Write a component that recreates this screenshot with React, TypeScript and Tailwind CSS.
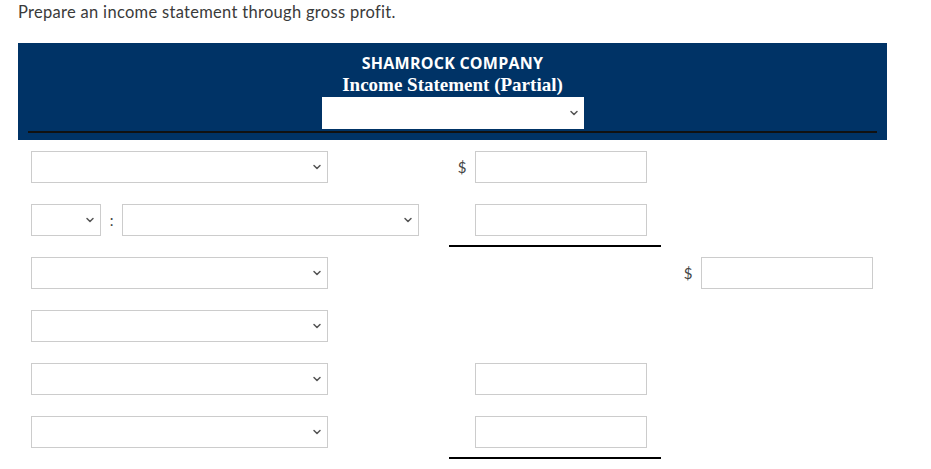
import { ChevronDown } from "lucide-react";

function Select({ w, plain }: { w: string; plain?: boolean }) {
  return (
    <div
      className={`${w} h-[32px] bg-white flex items-center justify-end pr-[4px] ${
        plain ? "" : "border border-[#cccccc]"
      }`}
    >
      <ChevronDown size={12} strokeWidth={3} className="text-[#555555]" />
    </div>
  );
}

function Input({ dollar }: { dollar?: boolean }) {
  return (
    <div className="flex items-center">
      <span className="w-[26px] text-center text-[15px] text-[#444444]">{dollar ? "$" : ""}</span>
      <div className="w-[172px] h-[32px] bg-white border border-[#cccccc]" />
    </div>
  );
}

export default function App() {
  const row = "h-[53px] flex items-start";
  const col1 = "w-[418px] flex items-start";
  const col2 = "w-[212px]";
  const ruled = "w-[212px] pb-[9px] border-b-2 border-black";

  return (
    <div className="w-[931px] h-[469px] bg-white font-['Lato',sans-serif] text-[#333333]">
      <p className="pl-[18px] pt-[1px] text-[16.5px] leading-[22px] tracking-[0.3px] text-[#3a3a3a]">
        Prepare an income statement through gross profit.
      </p>

      <div className="ml-[18px] mt-[20px] w-[869px]">
        {/* cabecera azul */}
        <div className="bg-[#003366] h-[97px] px-[10px] pt-[10px] flex flex-col items-center">
          <div className="text-white font-['Open_Sans',sans-serif] font-bold text-[16px] leading-[20px] tracking-[0.25px]">
            SHAMROCK COMPANY
          </div>
          <div className="text-white font-['Liberation_Serif',serif] font-bold text-[19px] leading-[24px]">
            Income Statement (Partial)
          </div>
          <div className="mt-[0px]">
            <Select w="w-[262px]" plain />
          </div>
          <div className="w-full mt-[2px] h-[2px] bg-[#111111]" />
        </div>

        {/* filas */}
        <div className="pl-[13px] pt-[11px]">
          <div className={row}>
            <div className={col1}>
              <Select w="w-[297px]" />
            </div>
            <div className={col2}>
              <Input dollar />
            </div>
          </div>

          <div className={row}>
            <div className={col1}>
              <Select w="w-[70px]" />
              <span className="w-[21px] h-[32px] flex items-center justify-center text-[15px] text-[#444444]">:</span>
              <Select w="w-[297px]" />
            </div>
            <div className={ruled}>
              <Input />
            </div>
          </div>

          <div className={row}>
            <div className={col1}>
              <Select w="w-[297px]" />
            </div>
            <div className={col2} />
            <div className="pl-[14px]">
              <Input dollar />
            </div>
          </div>

          <div className={row}>
            <div className={col1}>
              <Select w="w-[297px]" />
            </div>
          </div>

          <div className={row}>
            <div className={col1}>
              <Select w="w-[297px]" />
            </div>
            <div className={col2}>
              <Input />
            </div>
          </div>

          <div className={row}>
            <div className={col1}>
              <Select w="w-[297px]" />
            </div>
            <div className={ruled}>
              <Input />
            </div>
          </div>
        </div>
      </div>
    </div>
  );
}
